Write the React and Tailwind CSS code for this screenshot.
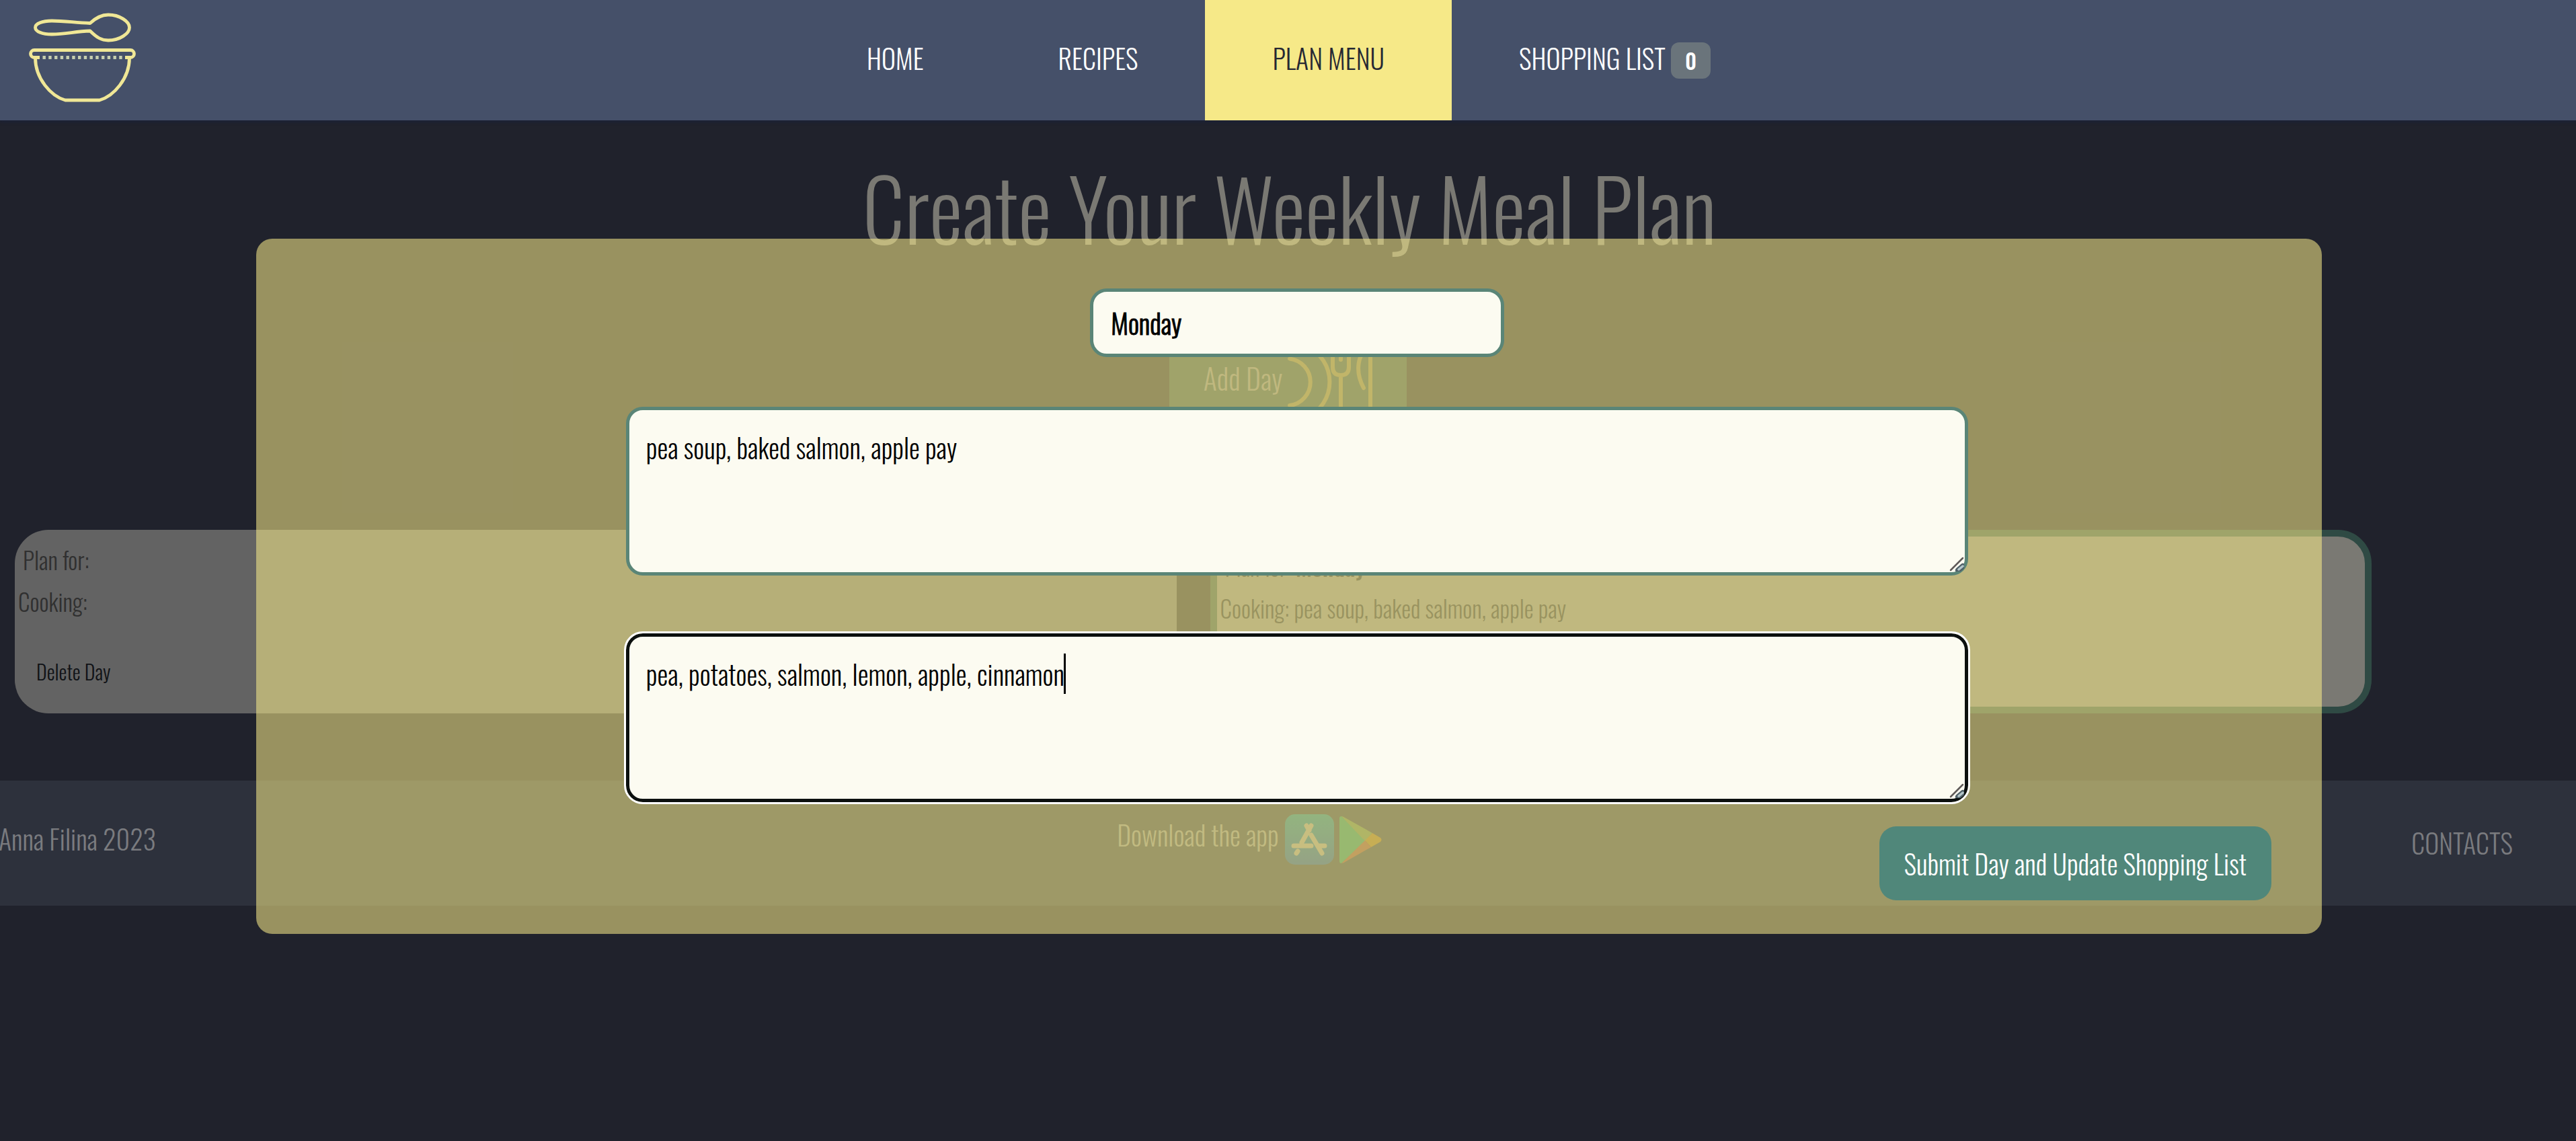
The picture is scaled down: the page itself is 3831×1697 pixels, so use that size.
function BowlLogo() {
  return (
    <svg width="164" height="140" viewBox="40 16 164 140" fill="none" stroke="#f0e796" strokeWidth="4.8" strokeLinejoin="round" aria-hidden="true">
      <path d="M134 34.5C144 25 152 22 161 22C178 22 192.500 32 192.500 41C192.500 50 178 60 161 60C151 60 144 56 134 46C112 46.500 98 51 77 51C63 51 52.500 47 52.500 41C52.500 35 63 31 77 31C98 31 112 34 134 34.500Z" />
      <path d="M59 85.500H51A5.500 5.500 0 0 1 51 74.500H194A5.500 5.500 0 0 1 194 85.500H186" />
      <path d="M52.500 86C52.500 117 76 143 97 149H148C169 143 192.500 117 192.500 86" />
      <path d="M63.500 85.500H183" stroke="#c6ceb0" strokeDasharray="4.400 4.350" />
    </svg>
  );
}

function TablewareIcon() {
  return (
    <svg width="126" height="126" viewBox="0 0 126 126" fill="none" stroke="#7d7140" strokeWidth="6" strokeLinecap="round" aria-hidden="true">
      <path d="M3 28.500A35 35 0 0 1 3 98" />
      <path d="M28 10A58 58 0 0 1 28 116" />
      <path d="M67 10V41Q67 53 79 53Q91 53 91 41V10M79 10V30M79 53V116" />
      <path d="M123 116V10C103 20 100 48 113 72" />
    </svg>
  );
}

function AppStoreIcon() {
  return (
    <svg width="73" height="75" viewBox="0 0 73 75" aria-hidden="true">
      <defs>
        <linearGradient id="store" x1="0" y1="0" x2="0" y2="1">
          <stop offset="0" stopColor="#136f74" />
          <stop offset="1" stopColor="#194680" />
        </linearGradient>
      </defs>
      <rect width="73" height="75" rx="15" fill="url(#store)" />
      <g stroke="#8d8676" strokeWidth="7" strokeLinecap="round">
        <path d="M39 17L25 42M32 17L36 24M39 31L55 58M13 47H39M51 47H59M19 55L17 58" />
      </g>
    </svg>
  );
}

function PlayStoreIcon() {
  return (
    <svg width="64" height="70" viewBox="0 0 64 70" aria-hidden="true">
      <path d="M0 3Q0 0 3 0L41 35L3 70Q0 70 0 67Z" fill="#1f7a50" />
      <path d="M3 0Q5 0 8 2L49 25L38 37Z" fill="#56703a" />
      <path d="M49 25L61 32Q64 35 61 38L47 46L38 36Z" fill="#8a6012" />
      <path d="M38 36L47 46L10 67Q6 70 3 70Z" fill="#80402c" />
    </svg>
  );
}

function ResizeGrip() {
  return (
    <svg className="absolute right-[6px] bottom-[6px]" width="25" height="25" viewBox="0 0 25 25" strokeLinecap="round" aria-hidden="true">
      <path d="M5 23L23 5" stroke="#5f5a58" strokeWidth="2.500" />
      <path d="M16 23L23 17" stroke="#4f6068" strokeWidth="8" />
      <path d="M17 22L23 17" stroke="#b4c6ca" strokeWidth="3.500" />
    </svg>
  );
}

const navItems = [{ label: "HOME" }, { label: "RECIPES" }, { label: "PLAN MENU", active: true }, { label: "SHOPPING LIST", count: 0 }];

function DayCard({ day, meals, className }) {
  return (
    <article className={"rounded-[50px] px-1 pt-[18px] text-[35px] leading-[52px] " + className}>
      <p className="mb-[10px] pl-2">
        Plan for: {day && <span className="font-medium">{day}</span>}
      </p>
      <p className="pl-[1px]">Cooking: {meals}</p>
      <button type="button" className="mt-[57px] ml-7 block text-[30px] leading-[44px] text-[#101216]">
        Delete Day
      </button>
    </article>
  );
}

export default function App() {
  return (
    <div className="relative min-h-screen overflow-hidden bg-[#20222c] font-['Oswald',sans-serif] text-[40px] leading-[60px] font-light">
      <header className="relative h-[179px] bg-[#455069] shadow-[0_2px_5px_#1a2138]">
        <a href="#home" aria-label="Home page" className="absolute top-4 left-10">
          <BowlLogo />
        </a>
        <nav className="h-full pl-[2px]">
          <ul className="flex h-full justify-center">
            {navItems.map((item) => (
              <li key={item.label}>
                <a
                  href="#menu"
                  className={"block h-full px-[100px] pt-14 whitespace-nowrap " + (item.active ? "bg-[#f6e988] text-[#262833]" : "text-white")}
                >
                  {item.label}
                  {item.count !== undefined && (
                    <>
                      {" "}
                      <span className="inline-block rounded-[12px] bg-[#6a747b] px-[21px] py-[11px] text-[32px] leading-none font-medium">{item.count}</span>
                    </>
                  )}
                </a>
              </li>
            ))}
          </ul>
        </nav>
      </header>

      <main>
        <h1 className="pt-[54px] pl-[4px] text-center text-[125px] leading-[150px] text-[#7a7973]">Create Your Weekly Meal Plan</h1>
        <button type="button" className="mx-auto mt-[117px] flex h-[136px] items-center gap-2 bg-[#324844] px-[51px] text-[42px] text-[#7a7973]">
          <span className="pb-3">Add Day</span>
          <TablewareIcon />
        </button>
        <section aria-label="Planned days" className="mt-[152px] grid h-[273px] grid-cols-2 gap-[50px] pr-[304px] pl-[22px]">
          <DayCard className="bg-[#636363] text-[#303030]" />
          <DayCard day="Monday" meals="pea soup, baked salmon, apple pay" className="border-[10px] border-[#2f4a44] bg-[#7a7973] text-[#22232c]" />
        </section>
      </main>

      <footer className="mt-[100px] grid h-[186px] grid-cols-[1fr_auto_1fr] items-start bg-[#2d313c] pr-[94px] text-[#7a7b7f]">
        <p className="-ml-[2px] pt-14">Anna Filina 2023</p>
        <div className="mr-5 flex pt-[50px] text-[#7d7d77]">
          <span className="mr-[9px]">Download the app</span>
          <span className="mr-2">
            <AppStoreIcon />
          </span>
          <span className="pt-[3px]">
            <PlayStoreIcon />
          </span>
        </div>
        <a href="#contacts" className="justify-self-end pt-[62px]">
          CONTACTS
        </a>
      </footer>

      <form
        role="dialog"
        aria-label="Plan a day"
        className="absolute top-[355px] right-[378px] left-[381px] flex flex-col items-center rounded-[24px] bg-[rgba(247,233,137,0.565)] pt-[74px] pb-[50px] pl-6"
      >
        <input
          aria-label="Day"
          type="text"
          defaultValue="Monday"
          className="h-[102px] w-[20.2%] rounded-[25px] border-[5px] border-[#5a8577] bg-[#fcfbf1] px-[26px] text-black [-webkit-text-stroke:1px_black]"
        />
        <div className="relative mt-[74px] w-[65.5%]">
          <textarea
            aria-label="Meals"
            defaultValue="pea soup, baked salmon, apple pay"
            className="block h-[251px] w-full resize-none rounded-[25px] border-[5px] border-[#5a8577] bg-[#fcfbf1] p-[25px] text-black"
          />
          <ResizeGrip />
        </div>
        <div className="relative mt-[86px] w-[65.5%]">
          <textarea
            aria-label="Ingredients"
            defaultValue="pea, potatoes, salmon, lemon, apple, cinnamon"
            className="block h-[251px] w-full resize-none rounded-[25px] border-[5px] border-[#0c100f] bg-[#fcfbf1] p-[25px] text-black outline-[3px] outline-white outline-solid"
          />
          <span className="absolute top-[30px] left-[651px] h-[60px] w-[3px] bg-black" />
          <ResizeGrip />
        </div>
        <button type="submit" className="mt-9 mr-[75px] self-end rounded-[25px] bg-[#50877a] px-[37px] py-[25px] text-white">
          Submit Day and Update Shopping List
        </button>
      </form>
    </div>
  );
}
